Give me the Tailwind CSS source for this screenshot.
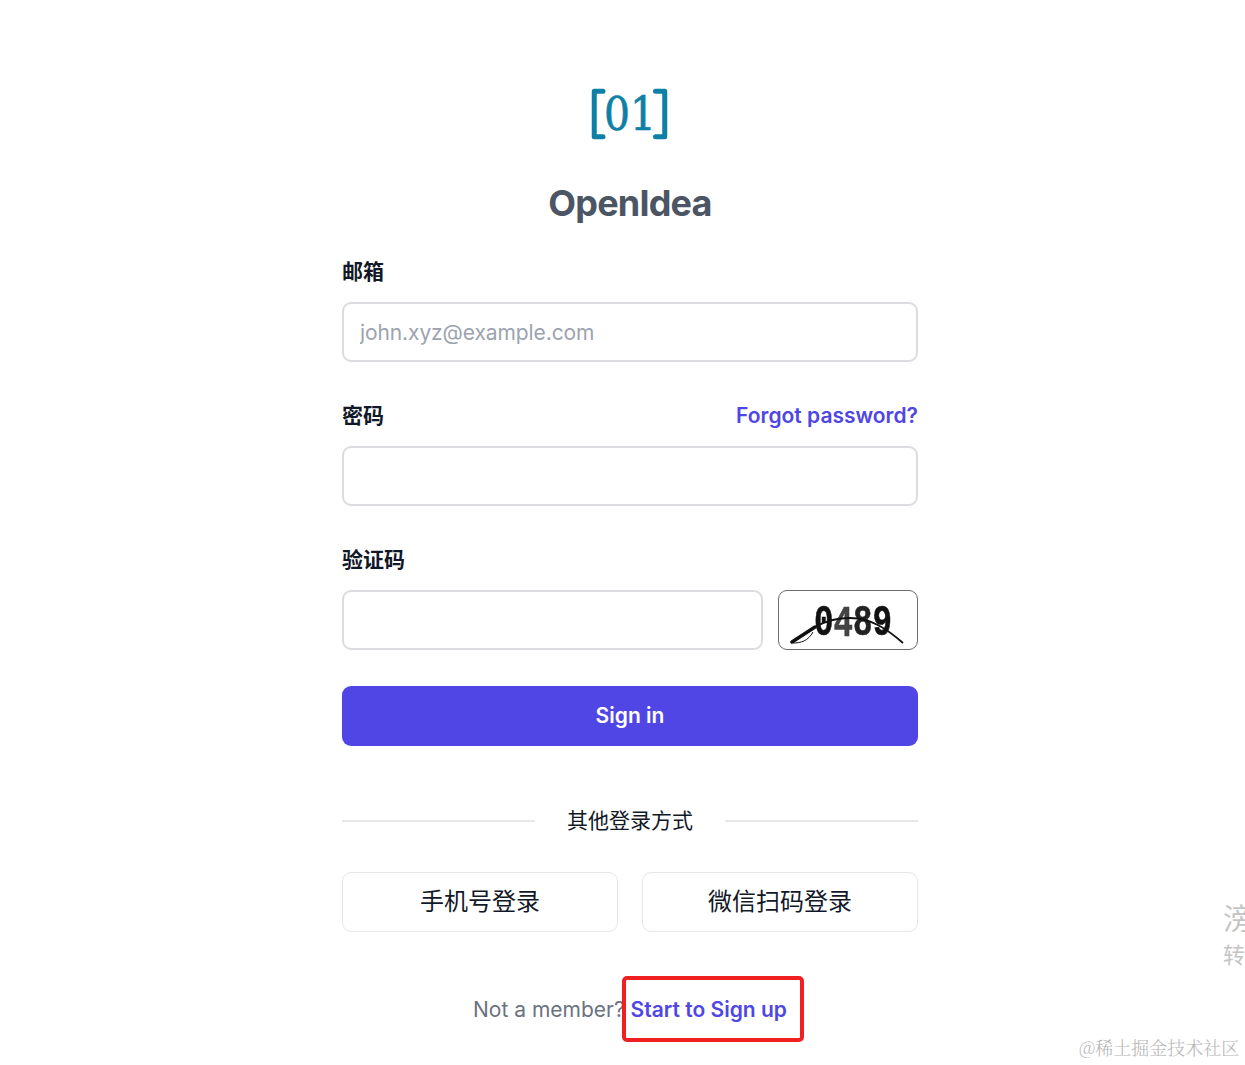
<!DOCTYPE html>
<html lang="zh-CN">
<head>
  <meta charset="UTF-8">
  <meta name="viewport" content="width=device-width, initial-scale=1.0">
  <title>OpenIdea - Sign in</title>
  <script src="https://cdn.jsdelivr.net/npm/@tailwindcss/browser@4"></script>
</head>
<body class="bg-white font-['Inter','Noto_Sans_CJK_SC',sans-serif]">
  <div class="relative h-[1065px] w-full overflow-hidden">
    <div class="ml-[342px] w-[576px] pt-[86px]">
      <!-- Logo -->
      <svg class="mx-auto block" width="80" height="56" viewBox="0 0 80 56">
        <path d="M13 5.250H4.250V50.750H13" fill="none" stroke="#0e7fa5" stroke-width="5" stroke-linecap="round" stroke-linejoin="round"/>
        <path d="M65.500 5.250H74.750V50.750H65.500" fill="none" stroke="#0e7fa5" stroke-width="5" stroke-linecap="round" stroke-linejoin="round"/>
        <text x="14" y="44" font-family="'DejaVu Serif','Liberation Serif',serif" font-size="46" textLength="52" lengthAdjust="spacingAndGlyphs" fill="#0e7fa5" stroke="#0e7fa5" stroke-width="0.7">01</text>
      </svg>
      <h1 class="mt-[34px] text-center text-[36px] leading-[54px] font-bold tracking-[-0.8px] text-[#4b5563]">OpenIdea</h1>

      <!-- Form -->
      <form class="mt-[24px]">
        <label class="block text-[21px] leading-[36px] font-semibold text-[#111827]">邮箱</label>
        <input type="text" placeholder="john.xyz@example.com" class="mt-[12px] block h-[60px] w-full rounded-[9px] border-2 border-[#dcdde1] bg-white px-[16px] text-[21px] tracking-[-0.1px] text-gray-900 placeholder:text-[#9ca3af]">

        <div class="mt-[36px] flex items-center justify-between">
          <label class="text-[21px] leading-[36px] font-semibold text-[#111827]">密码</label>
          <a class="text-[21px] leading-[36px] font-semibold text-[#4f46e5]">Forgot password?</a>
        </div>
        <input type="password" class="mt-[12px] block h-[60px] w-full rounded-[9px] border-2 border-[#dcdde1] bg-white px-[16px] text-[21px]">

        <label class="mt-[36px] block text-[21px] leading-[36px] font-semibold text-[#111827]">验证码</label>
        <div class="mt-[12px] flex items-center gap-[15px]">
          <input type="text" class="block h-[60px] min-w-0 flex-1 rounded-[9px] border-2 border-[#dcdde1] bg-white px-[16px] text-[21px]">
          <div class="h-[60px] w-[140px] shrink-0 rounded-[9px] border border-[#6b6b6b] bg-white">
            <svg class="blur-[0.6px]" width="138" height="58" viewBox="0 0 138 58">
              <text x="35" y="44" font-family="'Liberation Mono',monospace" font-weight="700" font-size="44" textLength="78" lengthAdjust="spacingAndGlyphs" fill="#111" stroke="#111" stroke-width="0.6">0<tspan fill="#444" stroke="#444" dy="1">4</tspan><tspan fill="#222" stroke="#222" dy="-1">8</tspan>9</text>
              <path d="M36 36C48 29 60 27 71 27C92 27 108 38 124 52" fill="none" stroke="#111" stroke-width="1.800"/>
              <path d="M13 51L36 36" fill="none" stroke="#111" stroke-width="3.500" stroke-linecap="round"/>
              <path d="M14 52C22 52 29 50 34 41" fill="none" stroke="#111" stroke-width="1"/>
            </svg>
          </div>
        </div>

        <button type="button" class="mt-[36px] block h-[60px] w-full rounded-[9px] bg-[#4f46e5] text-[21px] font-semibold text-white">Sign in</button>
      </form>

      <!-- Other login methods -->
      <div class="mt-[60px] flex items-center justify-between">
        <div class="h-[2px] w-[193px] bg-[#e5e7eb]"></div>
        <span class="text-[21px] leading-[30px] text-[#111827]">其他登录方式</span>
        <div class="h-[2px] w-[193px] bg-[#e5e7eb]"></div>
      </div>
      <div class="mt-[36px] grid grid-cols-2 gap-[24px]">
        <button type="button" class="h-[60px] rounded-[9px] border border-[#e5e7eb] bg-white text-[24px] text-[#111827]">手机号登录</button>
        <button type="button" class="h-[60px] rounded-[9px] border border-[#e5e7eb] bg-white text-[24px] text-[#111827]">微信扫码登录</button>
      </div>

      <!-- Footer -->
      <p class="mt-[60px] text-center text-[21px] leading-[36px] text-[#6b7280]">Not a member? <a class="relative font-semibold text-[#4f46e5]">Start to Sign up<span class="absolute top-[-21px] right-[-17px] bottom-[-20px] left-[-9px] rounded-[5px] border-[4px] border-[#f02020]"></span></a></p>
    </div>

    <!-- Watermarks -->
    <div class="absolute top-[901px] left-[1223px] w-[22px] overflow-hidden text-[#c4c4c4]">
      <div class="w-[30px] text-[29px] leading-[38px]">滂</div>
      <div class="w-[30px] text-[22px] leading-[32px]">转</div>
    </div>
    <div class="absolute top-[1034px] left-[1079px] font-['Noto_Serif_CJK_SC','Noto_Sans_CJK_SC',serif] text-[18px] leading-[26px] font-light whitespace-nowrap text-[#b5b5b5]">@稀土掘金技术社区</div>
  </div>
</body>
</html>
